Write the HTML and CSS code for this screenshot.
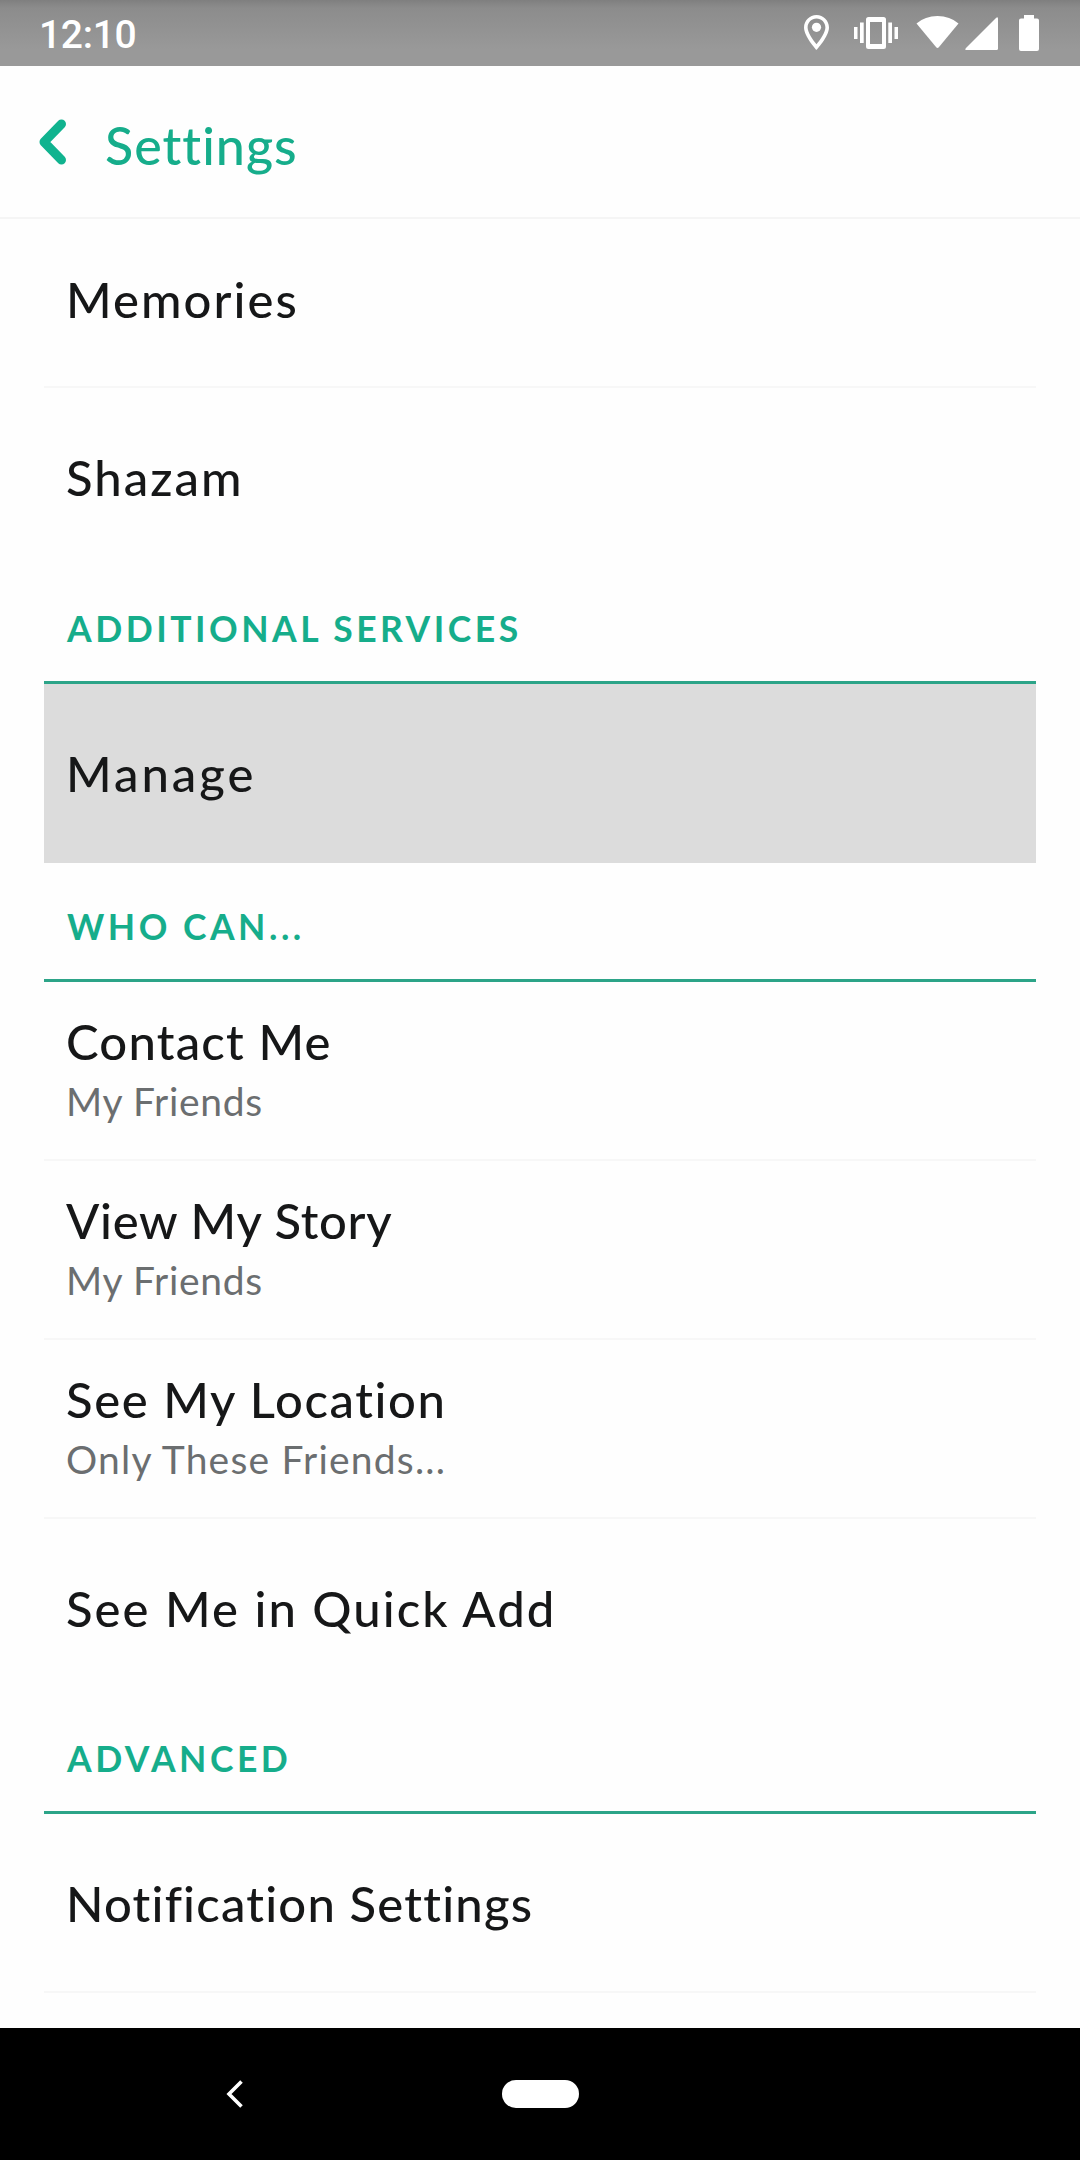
FILE: index.html
```html
<!DOCTYPE html>
<html lang="en">
<head>
    <title>Settings</title>
    <meta charset="UTF-8">
    <link rel="stylesheet" href="styles.css">
</head>
<body>
    <div class="status-bar">
        <span class="clock">12:10</span>
        <svg class="status-icons" width="240" height="66" viewBox="800 0 240 66" fill="#fff">
            <!-- location -->
            <path fill-rule="evenodd" d="M816.5 15C809.6 15 804 20.6 804 27.5C804 36.5 816.5 50 816.5 50S829 36.5 829 27.5C829 20.6 823.4 15 816.5 15ZM816.5 18.6C821.4 18.6 825.4 22.6 825.4 27.5C825.4 32 820.6 39.3 816.5 44.3C812.4 39.3 807.6 32 807.6 27.5C807.6 22.6 811.6 18.6 816.5 18.6Z"/>
            <circle cx="816.5" cy="27.3" r="4.6"/>
            <!-- vibrate -->
            <path fill-rule="evenodd" d="M868.5 17H883.5Q886 17 886 19.5V46.500Q886 49 883.500 49H868.500Q866 49 866 46.500V19.500Q866 17 868.500 17ZM870 22V44H882V22Z"/>
            <path d="M854 27h3.500v12h-3.500zM860 22.500h3.700v20.500h-3.700zM888.300 22.500h3.700v20.500h-3.700zM894.500 27h3.500v12h-3.500z"/>
            <!-- wifi -->
            <path d="M916.500 23.500Q925 16 937.500 16Q950 16 958.500 23.500L939 47Q937.500 48.800 936 47Z"/>
            <!-- signal -->
            <path d="M998 19V48.500Q998 50 996.500 50H967Q964 50 966 48L996 18Q998 16 998 19Z"/>
            <!-- battery -->
            <path d="M1024 15H1034V18.500H1037Q1039 18.500 1039 20.500V49Q1039 51 1037 51H1021Q1019 51 1019 49V20.500Q1019 18.500 1021 18.500H1024Z"/>
        </svg>
    </div>

    <div class="header">
        <svg class="back" width="28" height="46" viewBox="0 0 28 46">
            <path d="M22.500 5L5 23L22.500 41" fill="none" stroke="#10b38f" stroke-width="9" stroke-linecap="round" stroke-linejoin="round"/>
        </svg>
        <h1>Settings</h1>
    </div>

    <div class="content">
        <div class="row memories"><span class="title wide">Memories</span></div>
        <div class="row last"><span class="title wide">Shazam</span></div>

        <h2>ADDITIONAL SERVICES</h2>
        <div class="row last pressed"><span class="title wider">Manage</span></div>

        <h2 class="who-can">WHO CAN...</h2>
        <div class="row"><span class="title">Contact Me</span><span class="value">My Friends</span></div>
        <div class="row"><span class="title tight">View My Story</span><span class="value">My Friends</span></div>
        <div class="row"><span class="title loose">See My Location</span><span class="value long">Only These Friends...</span></div>
        <div class="row last"><span class="title wide">See Me in Quick Add</span></div>

        <h2 class="advanced">ADVANCED</h2>
        <div class="row"><span class="title">Notification Settings</span></div>
    </div>

    <div class="nav-bar">
        <svg class="nav-back" width="18" height="28" viewBox="0 0 18 28">
            <path d="M15.500 1.500L3 14L15.500 26.500" fill="none" stroke="#fff" stroke-width="3.600"/>
        </svg>
        <div class="home-pill"></div>
    </div>
</body>
</html>
```
FILE: styles.css
```css
* {
    box-sizing: border-box;
}

body {
    margin: 0;
    height: 2160px;
    display: flex;
    flex-direction: column;
    overflow: hidden;
    background: #fefefe;
    color: #161718;
    font-family: Lato, "Open Sans", sans-serif;
}

.status-bar {
    height: 66px;
    flex: none;
    display: flex;
    align-items: center;
    justify-content: space-between;
    padding: 0 40px 0 39px;
    background: linear-gradient(#7f7f7f, #8c8c8c 12%, #999 75%);
}

.clock {
    font-family: Roboto, sans-serif;
    font-size: 39px;
    font-weight: 500;
    line-height: 66px;
    letter-spacing: -0.3px;
    padding-top: 3px;
    color: #fff;
}

.header {
    height: 153px;
    flex: none;
    display: flex;
    align-items: center;
    padding-left: 39px;
    border-bottom: 2px solid #f5f5f5;
}

.back {
    margin-right: 38px;
}

h1 {
    margin: 7px 0 0;
    font-size: 52px;
    font-weight: 500;
    line-height: 60px;
    letter-spacing: 1px;
    color: #16ad8b;
}

.content {
    flex: 1;
    min-height: 0;
    padding: 0 44px;
    overflow: hidden;
}

.row {
    height: 179px;
    display: flex;
    flex-direction: column;
    justify-content: center;
    padding: 0 22px;
    border-bottom: 2px solid #f7f7f7;
}

.row.memories {
    height: 169px;
    padding-bottom: 8px;
}

.row.last {
    border-bottom: none;
    padding-bottom: 2px;
}

.row.pressed {
    background: #dcdcdc;
}

.title {
    font-size: 49px;
    font-weight: 500;
    line-height: 60px;
    letter-spacing: 1.2px;
}

.title.tight {
    letter-spacing: 0.7px;
}

.title.loose {
    letter-spacing: 1.6px;
}

.title.wide {
    letter-spacing: 2.05px;
}

.title.wider {
    letter-spacing: 3px;
}

.value {
    font-size: 39px;
    line-height: 60px;
    letter-spacing: 0.7px;
    color: #6b6e70;
}

.value.long {
    letter-spacing: 1.2px;
}

h2 {
    margin: 0;
    height: 117px;
    padding: 40px 22px 0 23px;
    border-bottom: 3px solid #2ca488;
    font-size: 35.5px;
    font-weight: 700;
    line-height: 44px;
    letter-spacing: 3.5px;
    color: #16ad8b;
}

h2.who-can {
    height: 119px;
    padding-top: 42px;
}

h2.advanced {
    height: 116px;
    padding-top: 39px;
}

.nav-bar {
    height: 132px;
    flex: none;
    display: flex;
    align-items: center;
    padding-left: 226px;
    background: #000;
}

.home-pill {
    width: 77px;
    height: 28px;
    margin-left: 258px;
    border-radius: 14px;
    background: #fff;
}
```
